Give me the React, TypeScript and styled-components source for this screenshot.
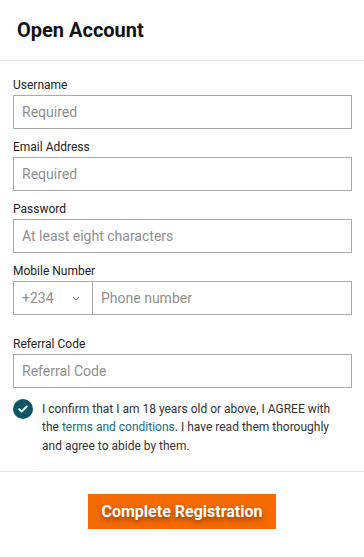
import React, { useState } from 'react';
import styled, { createGlobalStyle } from 'styled-components';

const GlobalStyle = createGlobalStyle`
  * { box-sizing: border-box; }
  html, body {
    margin: 0;
    padding: 0;
    background: #ffffff;
    font-family: Roboto, "Liberation Sans", Arial, sans-serif;
    color: #222222;
  }
`;

const Page = styled.div`
  width: 100%;
  min-height: 557px;
  background: #ffffff;
`;

const Header = styled.header`
  height: 61px;
  display: flex;
  align-items: center;
  padding: 0 17px;
  border-bottom: 1px solid #e6e6e6;
`;

const Title = styled.h1`
  margin: 0;
  font-size: 20px;
  font-weight: 700;
  color: #111111;
`;

const Form = styled.form`
  display: flex;
  flex-direction: column;
  padding: 16px 12px 0 13px;
`;

const Field = styled.div<{ $extra?: number }>`
  display: flex;
  flex-direction: column;
  margin-bottom: ${p => 10 + (p.$extra || 0)}px;
`;

const Label = styled.label`
  font-size: 12px;
  line-height: 16px;
  margin-bottom: 2px;
  color: #222222;
`;

const Input = styled.input`
  height: 34px;
  width: 100%;
  border: 1px solid #aaaaaa;
  border-radius: 0;
  padding: 0 8px;
  font-family: inherit;
  font-size: 14px;
  color: #333333;
  outline: none;

  &::placeholder {
    color: #8f8f8f;
  }
`;

const PhoneRow = styled.div`
  display: flex;
  height: 34px;
  border: 1px solid #aaaaaa;
`;

const CodeSelect = styled.div`
  width: 79px;
  flex: none;
  display: flex;
  align-items: center;
  justify-content: space-between;
  padding: 0 12px 0 8px;
  border-right: 1px solid #aaaaaa;
  font-size: 14px;
  color: #8f8f8f;
`;

const PhoneInput = styled(Input)`
  height: 32px;
  border: none;
`;

const Agree = styled.div`
  display: flex;
  align-items: flex-start;
  gap: 9px;
  margin-top: 1px;
`;

const Check = styled.button<{ $on: boolean }>`
  flex: none;
  width: 20px;
  height: 20px;
  border-radius: 50%;
  border: none;
  padding: 0;
  display: flex;
  align-items: center;
  justify-content: center;
  background: ${p => (p.$on ? '#0e5566' : '#ffffff')};
  box-shadow: ${p => (p.$on ? 'none' : 'inset 0 0 0 1px #aaaaaa')};
  cursor: pointer;
`;

const AgreeText = styled.p`
  margin: 0;
  max-width: 298px;
  font-size: 12px;
  line-height: 18.5px;
  color: #333333;
  padding-top: 0.5px;
`;

const TermsLink = styled.a`
  color: #1a6b7c;
  text-decoration: none;
`;

const Divider = styled.hr`
  margin: 16px 0 0;
  border: none;
  border-top: 1px solid #e6e6e6;
`;

const Footer = styled.div`
  display: flex;
  justify-content: center;
  padding: 22px 0 27px;
`;

const SubmitButton = styled.button`
  width: 188px;
  height: 35px;
  border: none;
  border-radius: 0;
  background: #f46a00;
  color: #ffffff;
  font-family: inherit;
  font-size: 16px;
  font-weight: 700;
  text-shadow: 0 3px 5px rgba(100, 35, 0, 0.65);
  cursor: pointer;
`;

const App: React.FC = () => {
  const [agreed, setAgreed] = useState(true);

  return (
    <Page>
      <GlobalStyle />
      <Header>
        <Title>Open Account</Title>
      </Header>

      <Form onSubmit={e => e.preventDefault()}>
        <Field>
          <Label>Username</Label>
          <Input placeholder="Required" />
        </Field>
        <Field>
          <Label>Email Address</Label>
          <Input placeholder="Required" type="email" />
        </Field>
        <Field>
          <Label>Password</Label>
          <Input placeholder="At least eight characters" type="password" />
        </Field>
        <Field $extra={11}>
          <Label>Mobile Number</Label>
          <PhoneRow>
            <CodeSelect>
              +234
              <svg width="8" height="5" viewBox="0 0 8 5" fill="none">
                <path d="M1 1l3 3 3-3" stroke="#666" strokeWidth="1" />
              </svg>
            </CodeSelect>
            <PhoneInput placeholder="Phone number" />
          </PhoneRow>
        </Field>
        <Field>
          <Label>Referral Code</Label>
          <Input placeholder="Referral Code" />
        </Field>

        <Agree>
          <Check type="button" $on={agreed} onClick={() => setAgreed(!agreed)}>
            {agreed && (
              <svg width="10" height="8" viewBox="0 0 10 8" fill="none">
                <path d="M1.2 4.2l2.5 2.3L8.8 1.4" stroke="#fff" strokeWidth="1.8" strokeLinecap="round" strokeLinejoin="round" />
              </svg>
            )}
          </Check>
          <AgreeText>
            I confirm that I am 18 years old or above, I AGREE with the{' '}
            <TermsLink href="#">terms and conditions</TermsLink>. I have read them thoroughly
            and agree to abide by them.
          </AgreeText>
        </Agree>
      </Form>

      <Divider />
      <Footer>
        <SubmitButton type="submit">Complete Registration</SubmitButton>
      </Footer>
    </Page>
  );
};

export default App;
